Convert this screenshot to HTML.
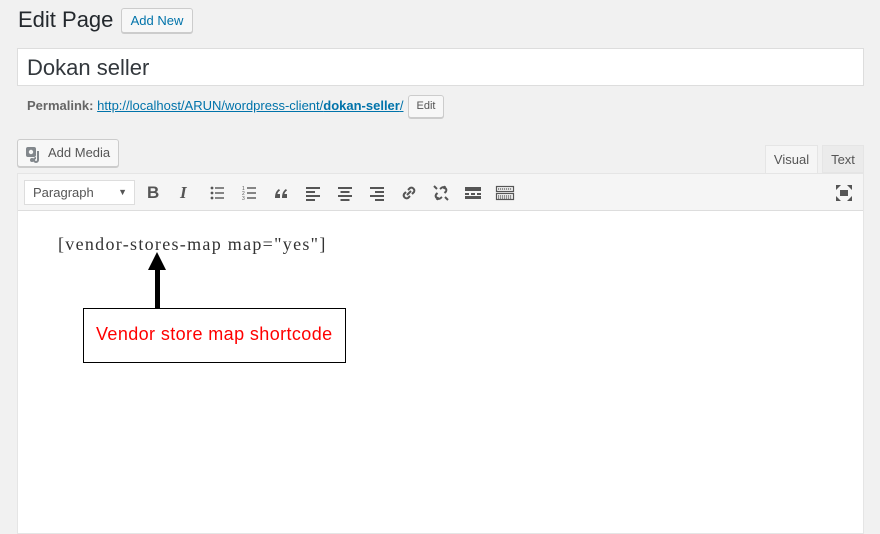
<!DOCTYPE html>
<html><head><style>
*{box-sizing:border-box;margin:0;padding:0}
body{width:880px;height:534px;background:#f1f1f1;font-family:"Liberation Sans",sans-serif;position:relative;overflow:hidden;color:#23282d}
.a{position:absolute}
.btn{position:absolute;border:1px solid #ccc;background:#f7f7f7;border-radius:3px;box-shadow:0 1px 0 #ccc;font-size:13px;color:#555}
.ic{position:absolute;top:183px;width:20px;height:20px}
</style></head><body>
<div class="a" style="left:18px;top:7px;font-size:22px;color:#23282d">Edit Page</div>
<div class="btn" style="left:121px;top:8px;width:72px;height:25px;color:#0073aa;font-size:13px;line-height:23px;text-align:center">Add New</div>
<div class="a" style="left:17px;top:48px;width:847px;height:38px;background:#fff;border:1px solid #ddd;font-size:22px;line-height:38px;padding-left:9px;color:#32373c">Dokan seller</div>
<div class="a" style="left:27px;top:97px;font-size:13px;color:#666;line-height:18px"><b>Permalink:</b> <span style="color:#0073aa;text-decoration:underline">http://localhost/ARUN/wordpress-client/<b>dokan-seller</b>/</span></div>
<div class="btn" style="left:408px;top:95px;width:36px;height:23px;font-size:11px;line-height:21px;text-align:center">Edit</div>
<div class="btn" style="left:17px;top:139px;width:102px;height:28px;line-height:26px;padding-left:30px">Add Media
<svg class="a" style="left:7px;top:5px" width="18" height="18" viewBox="0 0 18 18"><rect x="1" y="2" width="10" height="10" rx="2" fill="#82878c"/><circle cx="6" cy="7" r="2.2" fill="#f7f7f7"/><path d="M13 6v9a2 2 0 1 1-2-2" stroke="#82878c" stroke-width="2" fill="none"/><circle cx="7" cy="15" r="2" fill="#82878c"/></svg></div>
<div class="a" style="left:765px;top:145px;width:53px;height:29px;background:#f5f5f5;border:1px solid #e5e5e5;border-bottom:none;font-size:13px;color:#555;text-align:center;line-height:28px">Visual</div>
<div class="a" style="left:822px;top:145px;width:42px;height:28px;background:#ebebeb;border:1px solid #e5e5e5;font-size:13px;color:#555;text-align:center;line-height:28px">Text</div>
<div class="a" style="left:17px;top:173px;width:847px;height:361px;border:1px solid #e5e5e5;background:#fff"></div>
<div class="a" style="left:18px;top:174px;width:845px;height:37px;background:#f5f5f5;border-bottom:1px solid #ddd"></div>
<div class="a" style="left:24px;top:180px;width:111px;height:25px;background:#fff;border:1px solid #ddd;font-size:13px;line-height:23px;padding-left:8px;color:#555">Paragraph<span class="a" style="right:7px;top:0;font-size:9px;color:#555">▼</span></div>
<div class="a" style="left:147px;top:183px;font-size:17px;font-weight:bold;color:#555">B</div>
<div class="a" style="left:180px;top:183px;font-size:17px;font-style:italic;font-family:'Liberation Serif',serif;font-weight:bold;color:#555">I</div>
<svg class="ic" style="left:207px" viewBox="0 0 20 20" fill="#555"><circle cx="5" cy="5" r="1.4"/><circle cx="5" cy="10" r="1.4"/><circle cx="5" cy="15" r="1.4"/><rect x="8" y="4.3" width="9" height="1.4"/><rect x="8" y="9.3" width="9" height="1.4"/><rect x="8" y="14.3" width="9" height="1.4"/></svg>
<svg class="ic" style="left:239px" viewBox="0 0 20 20" fill="#555"><text x="3" y="7" font-size="5">1</text><text x="3" y="12" font-size="5">2</text><text x="3" y="17" font-size="5">3</text><rect x="8" y="4.3" width="9" height="1.4"/><rect x="8" y="9.3" width="9" height="1.4"/><rect x="8" y="14.3" width="9" height="1.4"/></svg>
<svg class="ic" style="left:271px" viewBox="0 0 20 20" fill="#555"><path d="M4 15c0-4 1-7 4-9l1 1.5C7 9 6.5 10 6.5 11H9v4zM11 15c0-4 1-7 4-9l1 1.5c-2 1.5-2.5 2.5-2.5 3.5H16v4z"/></svg>
<svg class="ic" style="left:303px" viewBox="0 0 20 20" fill="#555"><rect x="3" y="4" width="14" height="2"/><rect x="3" y="8" width="9" height="2"/><rect x="3" y="12" width="14" height="2"/><rect x="3" y="16" width="9" height="2"/></svg>
<svg class="ic" style="left:335px" viewBox="0 0 20 20" fill="#555"><rect x="3" y="4" width="14" height="2"/><rect x="5.5" y="8" width="9" height="2"/><rect x="3" y="12" width="14" height="2"/><rect x="5.5" y="16" width="9" height="2"/></svg>
<svg class="ic" style="left:367px" viewBox="0 0 20 20" fill="#555"><rect x="3" y="4" width="14" height="2"/><rect x="8" y="8" width="9" height="2"/><rect x="3" y="12" width="14" height="2"/><rect x="8" y="16" width="9" height="2"/></svg>
<svg class="ic" style="left:399px" viewBox="0 0 20 20" fill="none" stroke="#555" stroke-width="2"><path d="M9 7l2-2a3 3 0 0 1 4 4l-2 2M11 13l-2 2a3 3 0 0 1-4-4l2-2M8 12l4-4"/></svg>
<svg class="ic" style="left:431px" viewBox="0 0 20 20" fill="none" stroke="#555" stroke-width="2"><path d="M9 6l2-1.5a3 3 0 0 1 4 4L13.5 10M11 14l-2 1.5a3 3 0 0 1-4-4L6.5 10M3 3l3 3M17 17l-3-3M14 3l-1 3M6 17l1-3"/></svg>
<svg class="ic" style="left:463px" viewBox="0 0 20 20" fill="#555"><rect x="2" y="4" width="16" height="4"/><rect x="2" y="10" width="4" height="2"/><rect x="8" y="10" width="4" height="2"/><rect x="14" y="10" width="4" height="2"/><rect x="2" y="13" width="16" height="3"/></svg>
<svg class="ic" style="left:495px" viewBox="0 0 20 20" fill="none" stroke="#555" stroke-width="1.2"><rect x="1.5" y="3.5" width="17" height="5"/><rect x="1.5" y="10.5" width="17" height="6"/><path d="M3 6h14M3 13h14M3 15h14" stroke-dasharray="1.2 0.8"/></svg>
<svg class="ic" style="left:834px" viewBox="0 0 20 20" fill="#555"><rect x="6" y="7" width="8" height="6"/><path d="M2 2h5l-5 5zM18 2h-5l5 5zM2 18h5l-5-5zM18 18h-5l5-5z"/></svg>
<div class="a" style="left:58px;top:234px;font-family:'Liberation Serif',serif;font-size:18px;letter-spacing:1.3px;color:#333">[vendor-stores-map map="yes"]</div>
<svg class="a" style="left:140px;top:250px" width="35" height="60"><path d="M17 2L8 20h18z" fill="#000"/><rect x="15" y="18" width="5" height="40" fill="#000"/></svg>
<div class="a" style="left:83px;top:308px;width:263px;height:55px;border:1px solid #000;background:#fff;color:#f00;font-size:18px;letter-spacing:0.4px;line-height:50px;padding-left:12px">Vendor store map shortcode</div>
</body></html>
